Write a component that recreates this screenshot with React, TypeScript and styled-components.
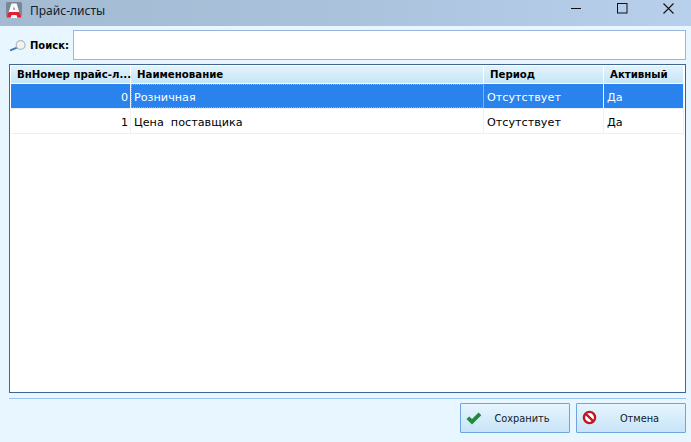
import React from 'react'
import styled, { createGlobalStyle } from 'styled-components'

const columns = '120px 353px 120px 80px'

const GlobalStyle = createGlobalStyle`
  html, body {
    margin: 0;
    padding: 0;
    background: #e8f6ff;
  }
  body {
    font-family: "DejaVu Sans", sans-serif;
    font-size: 12px;
    color: #000;
  }
`

const Window = styled.div`
  width: 691px;
  height: 442px;
  display: flex;
  flex-direction: column;
  overflow: hidden;
  background: #e8f6ff;
`

const TitleBar = styled.div`
  height: 26px;
  flex: none;
  display: flex;
  align-items: flex-start;
  background: linear-gradient(90deg, #a3bad2 0%, #aac2dc 50%, #b8d0ec 100%);
`

const Logo = styled.svg`
  width: 16px;
  height: 16px;
  margin: 2px 0 0 6px;
  flex: none;
`

const Title = styled.span`
  margin: 2px 0 0 8px;
  font-family: "Noto Sans", sans-serif;
  font-size: 12px;
  line-height: 18px;
  color: #10202c;
`

const WindowButtons = styled.div`
  margin-left: auto;
  display: flex;
  padding-top: 2px;
`

const WindowButton = styled.div`
  width: 46px;
  height: 12px;
  display: flex;
  align-items: center;
  justify-content: center;
`

const SearchRow = styled.div`
  display: flex;
  align-items: center;
  height: 30px;
  margin-top: 4px;
  padding: 0 5px 0 10px;
`

const SearchLabel = styled.label`
  margin-left: 4px;
  width: 43px;
  flex: none;
  font-weight: bold;
  font-size: 10px;
`

const SearchInput = styled.div`
  flex: 1;
  height: 28px;
  background: #fff;
  border: 1px solid #9ab6dc;
`

const Grid = styled.div`
  flex: 1;
  margin: 4px 5px 0 9px;
  border: 1px solid #3f6590;
  background: #fff;
  padding: 1px 1px 0 1px;
`

const HeaderRow = styled.div`
  display: grid;
  grid-template-columns: ${columns};
  height: 17px;
`

const HeaderCell = styled.div<{ $pad: number }>`
  display: flex;
  align-items: center;
  min-width: 0;
  padding-left: ${p => p.$pad}px;
  border-right: 1px solid #fff;
  background: linear-gradient(180deg, #e2f3fd 0%, #c6e5f6 100%);
  font-weight: bold;
  font-size: 10.2px;
  white-space: nowrap;
`

const DataRow = styled.div<{ $selected?: boolean }>`
  display: grid;
  grid-template-columns: ${columns};
  height: 24px;
  margin-top: 1px;
  background: ${p => (p.$selected ? '#2a82ec' : '#fff')};
  color: ${p => (p.$selected ? '#fff' : '#000')};
  box-shadow: 0 1px 0 #eef1f3;
`

const Cell = styled.div<{ $right?: boolean; $focus?: boolean }>`
  display: flex;
  align-items: center;
  justify-content: ${p => (p.$right ? 'flex-end' : 'flex-start')};
  padding: 2px 2px 0 3px;
  border-right: 1px solid ${p => (p.$focus ? '#ee9a40' : '#eef1f3')};
  outline: ${p => (p.$focus ? '1px dotted #ee9a40' : 'none')};
  outline-offset: -1px;
  font-size: 11.2px;
  white-space: pre;
  overflow: hidden;
`

const Footer = styled.div`
  flex: none;
  margin: 5px 5px 0 9px;
  height: 39px;
  border-top: 1px solid #9cc4f0;
  display: flex;
  justify-content: flex-end;
  align-items: flex-start;
  gap: 6px;
  padding-top: 4px;
`

const Button = styled.button`
  width: 110px;
  height: 30px;
  padding: 0 0 0 5px;
  display: flex;
  align-items: center;
  background: linear-gradient(180deg, #e6f5fe 0%, #c8e4f7 100%);
  border: 1px solid #70a4de;
  border-radius: 1px;
  font-family: "DejaVu Sans", sans-serif;
  font-size: 9.8px;
  color: #10202c;
`

const ButtonText = styled.span<{ $shift: number }>`
  flex: 1;
  text-align: center;
  padding-right: ${p => p.$shift}px;
`

const rows = [
  { id: 0, name: 'Розничная', period: 'Отсутствует', active: 'Да', selected: true },
  { id: 1, name: 'Цена  поставщика', period: 'Отсутствует', active: 'Да', selected: false },
]

const App: React.FC = () => {
  return (
    <Window>
      <GlobalStyle />
      <TitleBar>
        <Logo viewBox="0 0 16 16">
          <rect x="0" y="0" width="16" height="14" rx="1.5" fill="#7b8792" />
          <path d="M2.5 11 L5.4 1.5 H10.6 L13.5 11 Z" fill="#fff" />
          <path d="M6.8 7.8 H9.2 L8 4.2 Z" fill="#8b96a0" />
          <path d="M0.5 15.5 L2.8 10 H13.2 L15.5 15.5 H11.4 L10.4 13 H5.6 L4.6 15.5 Z" fill="#e5202e" />
          <path d="M5.6 13 H10.4 L11.4 16 H4.6 Z" fill="#f4f6f8" />
        </Logo>
        <Title>Прайс-листы</Title>
        <WindowButtons>
          <WindowButton>
            <svg width="11" height="11" viewBox="0 0 11 11"><path d="M0 5.5 H10" stroke="#111" strokeWidth="1" /></svg>
          </WindowButton>
          <WindowButton>
            <svg width="11" height="11" viewBox="0 0 11 11"><rect x="0.5" y="0.5" width="9.5" height="9.5" fill="none" stroke="#111" /></svg>
          </WindowButton>
          <WindowButton>
            <svg width="11" height="11" viewBox="0 0 11 11"><path d="M0.5 0.5 L10.5 10.5 M10.5 0.5 L0.5 10.5" stroke="#111" strokeWidth="1.1" /></svg>
          </WindowButton>
        </WindowButtons>
      </TitleBar>

      <SearchRow>
        <svg width="16" height="13" viewBox="0 0 16 13">
          <path d="M0.8 11.2 L7 8.6" stroke="#3f78ac" strokeWidth="1.8" strokeLinecap="round" />
          <circle cx="10.6" cy="6" r="4.4" fill="#f1f3f3" stroke="#b4babd" strokeWidth="1.3" />
        </svg>
        <SearchLabel>Поиск:</SearchLabel>
        <SearchInput />
      </SearchRow>

      <Grid>
        <HeaderRow>
          <HeaderCell $pad={6}>ВнНомер прайс-л...</HeaderCell>
          <HeaderCell $pad={6}>Наименование</HeaderCell>
          <HeaderCell $pad={6}>Период</HeaderCell>
          <HeaderCell $pad={6}>Активный</HeaderCell>
        </HeaderRow>
        {rows.map(r => (
          <DataRow key={r.id} $selected={r.selected}>
            <Cell $right>{r.id}</Cell>
            <Cell $focus={r.selected}>{r.name}</Cell>
            <Cell>{r.period}</Cell>
            <Cell>{r.active}</Cell>
          </DataRow>
        ))}
      </Grid>

      <Footer>
        <Button>
          <svg width="16" height="13" viewBox="0 0 16 13">
            <path d="M0.5 7 L3.2 4.4 L6 7 L12.6 0.6 L15.3 3.2 L6 12.4 Z" fill="#1f8a3c" />
          </svg>
          <ButtonText $shift={7}>Сохранить</ButtonText>
        </Button>
        <Button>
          <svg width="16" height="16" viewBox="0 0 16 16">
            <circle cx="7.5" cy="7.5" r="5.6" fill="#fff" stroke="#c4161c" strokeWidth="2.4" />
            <path d="M3.6 3.6 L11.4 11.4" stroke="#c4161c" strokeWidth="2.2" />
          </svg>
          <ButtonText $shift={4}>Отмена</ButtonText>
        </Button>
      </Footer>
    </Window>
  )
}

export default App
